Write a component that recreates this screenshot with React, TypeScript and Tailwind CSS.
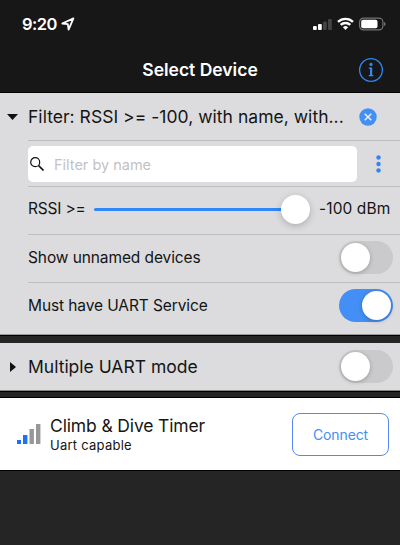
import React from "react";

function Toggle({ on = false }: { on?: boolean }) {
  return (
    <div
      className={`flex h-[33px] w-[54px] shrink-0 items-center rounded-full p-[2px] ${
        on ? "justify-end bg-[#438ff5]" : "justify-start bg-[#cacacc]"
      }`}
    >
      <div className="size-[29px] rounded-full bg-white shadow-[0_1px_4px_rgba(0,0,0,0.25)]" />
    </div>
  );
}

function StatusBar() {
  return (
    <div className="flex h-[47px] items-center justify-between pl-[22px] pr-[14px] text-white">
      <div className="flex items-center gap-[4px]">
        <span className="text-[16.5px] leading-5 font-semibold tracking-[-0.5px]">9:20</span>
        <svg className="size-[14px]" viewBox="0 0 14 14" fill="none">
          <path d="M12.4 1.4 1.3 6.5l5.5.7.8 5.4z" stroke="white" strokeWidth="1.8" strokeLinejoin="round" />
        </svg>
      </div>
      <div className="flex items-center gap-[5px]">
        <svg className="h-[14px] w-[19px]" viewBox="0 0 19 14">
          <rect x="0" y="9" width="3.8" height="4" rx="1" fill="white" />
          <rect x="5" y="7" width="3.8" height="6" rx="1" fill="white" />
          <rect x="10" y="4.5" width="3.8" height="8.5" rx="1" fill="#444" />
          <rect x="15" y="2" width="3.8" height="11" rx="1" fill="#444" />
        </svg>
        <svg className="h-[14px] w-[17px]" viewBox="0 0 17 14" fill="none" stroke="white" strokeWidth="2.4">
          <path d="M1 4.9a10.7 10.7 0 0 1 15 0" />
          <path d="M3.7 7.9a6.9 6.9 0 0 1 9.6 0" />
          <path d="M5.9 10.2a3.7 3.7 0 0 1 5.2 0L8.5 13z" fill="white" stroke="none" />
        </svg>
        <svg className="h-[14px] w-[27px]" viewBox="0 0 27 14">
          <rect x=".6" y="1.1" width="23.3" height="11.8" rx="3.8" fill="none" stroke="#737373" strokeWidth="1.2" />
          <rect x="2.2" y="2.8" width="16.3" height="8.4" rx="2" fill="white" />
          <path d="M25 5v4q1.6-.6 1.6-2T25 5z" fill="#737373" />
        </svg>
      </div>
    </div>
  );
}

function Header() {
  return (
    <header className="h-[93px] border-b border-black bg-[#171717]">
      <StatusBar />
      <div className="grid h-[45px] grid-cols-[1fr_auto_1fr] items-center px-[16px]">
        <span />
        <h1 className="text-[17.5px] leading-6 font-semibold text-white">Select Device</h1>
        <svg className="size-[26px] justify-self-end" viewBox="0 0 26 26" fill="none">
          <circle cx="13" cy="13" r="11.4" stroke="#2f86f5" strokeWidth="1.3" />
          <circle cx="13" cy="7.4" r="1.6" fill="#3288f5" />
          <path d="M13.1 10.6v8" stroke="#3288f5" strokeWidth="2.2" />
          <path d="M10.8 11.1h2.5M10.7 18.6h4.7" stroke="#3288f5" strokeWidth="1.1" />
        </svg>
      </div>
    </header>
  );
}

function FilterPanel() {
  return (
    <section className="flex h-[242px] flex-col border-b border-[#999] bg-[#dcdcde] pl-[28px] text-[#141414]">
      <div className="-ml-[28px] flex h-[47px] items-center pl-[7px]">
        <svg className="mt-px h-[6px] w-[11px]" viewBox="0 0 11 6">
          <path d="M0 0h11L5.5 6z" fill="#111" />
        </svg>
        <span className="ml-[10px] w-[324px] pt-px text-[17.5px] leading-6 tracking-[0.03px] whitespace-nowrap">
          Filter: RSSI &gt;= -100, with name, with...
        </span>
        <svg className="ml-[7px] size-[18px]" viewBox="0 0 18 18">
          <circle cx="9" cy="9" r="8.7" fill="#438ff5" />
          <path d="m5.7 5.7 6.6 6.6m0-6.6-6.6 6.6" stroke="#e5edf7" strokeWidth="1.6" />
        </svg>
      </div>
      <div className="flex h-[46px] items-center border-t border-[#bebebf] pt-px">
        <div className="flex h-[36px] w-[329px] items-center rounded-[5px] bg-white pl-[2px]">
          <svg className="size-[14px]" viewBox="0 0 14 14" fill="none" stroke="#111">
            <circle cx="5.2" cy="5.2" r="4.5" strokeWidth="1.2" />
            <path d="m8.5 8.5 5 5" strokeWidth="1.7" />
          </svg>
          <span className="ml-[10px] pt-px text-[14.5px] text-[#c2c2c4]">Filter by name</span>
        </div>
        <svg className="ml-[19px] h-[18px] w-[5px]" viewBox="0 0 5 18" fill="#2d86f6">
          <circle cx="2.5" cy="2.5" r="2.2" />
          <circle cx="2.5" cy="9" r="2.2" />
          <circle cx="2.5" cy="15.4" r="2.2" />
        </svg>
      </div>
      <div className="flex h-[48px] items-center border-t border-[#bebebf] pb-[3px] text-[15.5px]">
        <span className="w-[66px] tracking-[-0.2px] whitespace-nowrap">RSSI &gt;=</span>
        <div className="flex w-[216px] items-center">
          <div className="h-[3px] flex-1 rounded-l-full bg-[#2f88f8]" />
          <div className="size-[29px] rounded-full bg-white shadow-[0_2px_7px_rgba(0,0,0,0.22)]" />
        </div>
        <span className="ml-[9px] tracking-[0.1px] whitespace-nowrap">-100 dBm</span>
      </div>
      <div className="flex h-[48px] items-center justify-between border-t border-[#bebebf] pr-[7px] pb-[2px] text-[15.5px] tracking-[-0.1px]">
        <span>Show unnamed devices</span>
        <Toggle />
      </div>
      <div className="flex h-[48px] items-center justify-between border-t border-[#bebebf] pr-[7px] pb-[2px] text-[15.5px] tracking-[-0.1px]">
        <span>Must have UART Service</span>
        <Toggle on />
      </div>
    </section>
  );
}

export default function App() {
  return (
    <main className="h-[545px] w-[400px] overflow-hidden bg-[#252525] font-['Inter',sans-serif] [font-feature-settings:'calt'_0]">
      <Header />
      <FilterPanel />
      <div className="h-[8px] border-t border-black bg-[#252525]" />
      <section className="flex h-[48px] items-center border-b border-[#888] bg-[#dcdcde] pr-[7px] pl-[10px] text-[#141414]">
        <svg className="h-[10px] w-[6px]" viewBox="0 0 6 10">
          <path d="M0 0v10l6-5z" fill="#111" />
        </svg>
        <span className="ml-[12px] flex-1 pt-[2px] text-[17.5px]">Multiple UART mode</span>
        <Toggle />
      </section>
      <div className="h-[7px] border-y border-black bg-[#252525]" />
      <section className="flex h-[72px] items-center bg-white pr-[11px] pl-[16px]">
        <svg className="h-[22px] w-[25px]" viewBox="0 0 25 22">
          <rect x="1" y="17" width="4" height="4" fill="#1b73f2" />
          <rect x="7" y="12" width="4.4" height="9" fill="#1b73f2" />
          <rect x="13.5" y="6" width="4.4" height="15" fill="#979797" />
          <rect x="20" y="1" width="4.4" height="20" fill="#979797" />
        </svg>
        <div className="ml-[9px] flex flex-1 flex-col pt-[2px] text-[#151515]">
          <span className="text-[17.5px] leading-[20px] tracking-[-0.14px]">Climb &amp; Dive Timer</span>
          <span className="text-[13px] leading-[18px] tracking-[0.25px]">Uart capable</span>
        </div>
        <button className="h-[43px] w-[97px] rounded-[8px] border border-[#5587f2] text-[14px] tracking-[-0.1px] text-[#438ff5]">
          Connect
        </button>
      </section>
      <div className="h-px bg-black" />
    </main>
  );
}
